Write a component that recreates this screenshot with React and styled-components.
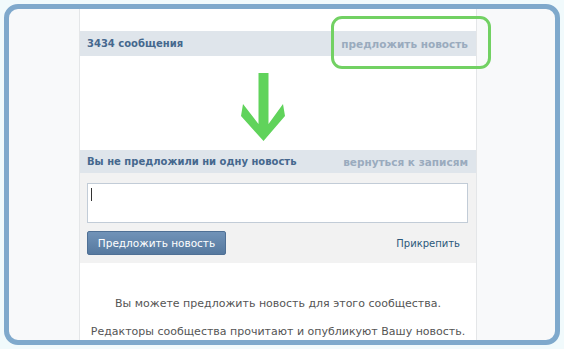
import React from 'react';
import styled, { createGlobalStyle } from 'styled-components';

const GlobalStyle = createGlobalStyle`
  html, body {
    margin: 0;
    padding: 0;
    background: #f1fafc;
  }
  body {
    font-family: "DejaVu Sans", Tahoma, sans-serif;
  }
`;

const Page = styled.div`
  width: 564px;
  height: 349px;
  padding: 4px;
  box-sizing: border-box;
`;

const Frame = styled.div`
  height: 341px;
  width: 556px;
  box-sizing: border-box;
  border: 5px solid #7fa9cc;
  border-radius: 14px;
  background: #f8f9fa;
  overflow: hidden;
  display: flex;
  padding-left: 70px;
`;

const Column = styled.div`
  position: relative;
  width: 396px;
  flex-shrink: 0;
  background: #fff;
  border-left: 1px solid #e4e6e8;
  border-right: 1px solid #e4e6e8;
  display: flex;
  flex-direction: column;
`;

const Spacer = styled.div`
  height: ${p => p.h}px;
  flex-shrink: 0;
`;

const Bar = styled.div`
  height: ${p => p.h}px;
  flex-shrink: 0;
  background: #dfe5eb;
  display: flex;
  align-items: center;
  justify-content: space-between;
  padding: 0 8px 0 7px;
  font-weight: bold;
`;

const BarTitle = styled.span`
  color: #45688e;
  font-size: 10px;
`;

const BarLink = styled.span`
  color: #9aabbe;
  font-size: 10.5px;
`;

const ArrowArea = styled.div`
  height: 94px;
  flex-shrink: 0;
  padding: 16px 0 0 161px;
  box-sizing: border-box;
`;

const Highlight = styled.div`
  position: absolute;
  left: 251px;
  top: 7px;
  width: 160px;
  height: 53px;
  box-sizing: border-box;
  border: 3px solid #72d163;
  border-radius: 11px;
`;

const Composer = styled.div`
  height: 90px;
  flex-shrink: 0;
  background: #f2f2f2;
  padding: 10px 8px 0 7px;
  box-sizing: border-box;
`;

const Field = styled.div`
  height: 40px;
  background: #fff;
  border: 1px solid #c2ccd7;
  box-sizing: border-box;
  padding: 4px 3px;
`;

const Caret = styled.div`
  width: 1px;
  height: 13px;
  background: #333;
`;

const Actions = styled.div`
  display: flex;
  justify-content: space-between;
  align-items: center;
  margin-top: 8px;
  padding-right: 8px;
`;

const Button = styled.button`
  width: 139px;
  height: 24px;
  border: 1px solid #4f7095;
  border-radius: 2px;
  background: linear-gradient(#7193b8, #56799f);
  color: #fff;
  font-family: inherit;
  font-size: 10.5px;
  padding: 0;
`;

const Attach = styled.span`
  color: #2b587a;
  font-size: 10px;
`;

const Info = styled.div`
  padding-top: 27px;
  text-align: center;
  color: #555;
  font-size: 11px;
  line-height: 28px;
`;

const Arrow = () => (
  <svg width="46" height="70" viewBox="241 71 46 70">
    <polygon
      fill="#60d35b"
      points="258.5,72 268.5,72 268.5,123 283,103 285,115 263.5,140 241,115 243,103 258.5,123"
    />
  </svg>
);

const App = () => (
  <>
    <GlobalStyle />
    <Page>
      <Frame>
        <Column>
          <Highlight />
          <Spacer h={22} />
          <Bar h={25}>
            <BarTitle>3434 сообщения</BarTitle>
            <BarLink>предложить новость</BarLink>
          </Bar>
          <ArrowArea>
            <Arrow />
          </ArrowArea>
          <Bar h={23}>
            <BarTitle>Вы не предложили ни одну новость</BarTitle>
            <BarLink>вернуться к записям</BarLink>
          </Bar>
          <Composer>
            <Field>
              <Caret />
            </Field>
            <Actions>
              <Button>Предложить новость</Button>
              <Attach>Прикрепить</Attach>
            </Actions>
          </Composer>
          <Info>
            <div>Вы можете предложить новость для этого сообщества.</div>
            <div>Редакторы сообщества прочитают и опубликуют Вашу новость.</div>
          </Info>
        </Column>
      </Frame>
    </Page>
  </>
);

export default App;
